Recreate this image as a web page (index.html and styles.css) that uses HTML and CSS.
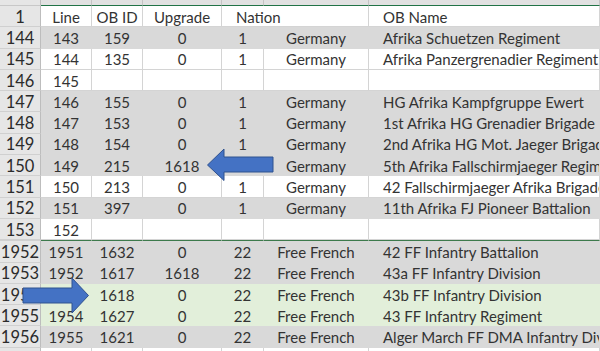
FILE: index.html
```html
<!DOCTYPE html>
<html>
<head>
<meta charset="utf-8">
<link rel="stylesheet" href="styles.css">
</head>
<body>
<div class="sheet">
  <div class="row colhdr">
    <div class="rh"></div><div class="ch"></div><div class="ch"></div><div class="ch"></div><div class="ch"></div><div class="ch"></div><div class="ch"></div>
  </div>
  <div class="row white">
    <div class="rh">1</div><div class="c">Line</div><div class="c">OB ID</div><div class="c">Upgrade</div><div class="c l span2">Nation</div><div class="c l">OB Name</div>
  </div>
  <div class="row gray">
    <div class="rh">144</div><div class="c">143</div><div class="c">159</div><div class="c">0</div><div class="c">1</div><div class="c">Germany</div><div class="c l">Afrika Schuetzen Regiment</div>
  </div>
  <div class="row white">
    <div class="rh">145</div><div class="c">144</div><div class="c">135</div><div class="c">0</div><div class="c">1</div><div class="c">Germany</div><div class="c l">Afrika Panzergrenadier Regiment</div>
  </div>
  <div class="row white">
    <div class="rh">146</div><div class="c">145</div><div class="c"></div><div class="c"></div><div class="c"></div><div class="c"></div><div class="c l"></div>
  </div>
  <div class="row gray">
    <div class="rh">147</div><div class="c">146</div><div class="c">155</div><div class="c">0</div><div class="c">1</div><div class="c">Germany</div><div class="c l">HG Afrika Kampfgruppe Ewert</div>
  </div>
  <div class="row gray">
    <div class="rh">148</div><div class="c">147</div><div class="c">153</div><div class="c">0</div><div class="c">1</div><div class="c">Germany</div><div class="c l">1st Afrika HG Grenadier Brigade</div>
  </div>
  <div class="row gray">
    <div class="rh">149</div><div class="c">148</div><div class="c">154</div><div class="c">0</div><div class="c">1</div><div class="c">Germany</div><div class="c l">2nd Afrika HG Mot. Jaeger Brigade</div>
  </div>
  <div class="row gray">
    <div class="rh">150</div><div class="c">149</div><div class="c">215</div><div class="c">1618</div><div class="c">1</div><div class="c">Germany</div><div class="c l">5th Afrika Fallschirmjaeger Regiment</div>
  </div>
  <div class="row white">
    <div class="rh">151</div><div class="c">150</div><div class="c">213</div><div class="c">0</div><div class="c">1</div><div class="c">Germany</div><div class="c l">42 Fallschirmjaeger Afrika Brigade</div>
  </div>
  <div class="row gray">
    <div class="rh">152</div><div class="c">151</div><div class="c">397</div><div class="c">0</div><div class="c">1</div><div class="c">Germany</div><div class="c l">11th Afrika FJ Pioneer Battalion</div>
  </div>
  <div class="row white">
    <div class="rh">153</div><div class="c">152</div><div class="c"></div><div class="c"></div><div class="c"></div><div class="c"></div><div class="c l"></div>
  </div>
  <div class="row gray split">
    <div class="rh">1952</div><div class="c">1951</div><div class="c">1632</div><div class="c">0</div><div class="c">22</div><div class="c">Free French</div><div class="c l">42 FF Infantry Battalion</div>
  </div>
  <div class="row gray">
    <div class="rh">1953</div><div class="c">1952</div><div class="c">1617</div><div class="c">1618</div><div class="c">22</div><div class="c">Free French</div><div class="c l">43a FF Infantry Division</div>
  </div>
  <div class="row green">
    <div class="rh">1954</div><div class="c">1953</div><div class="c">1618</div><div class="c">0</div><div class="c">22</div><div class="c">Free French</div><div class="c l">43b FF Infantry Division</div>
  </div>
  <div class="row green">
    <div class="rh">1955</div><div class="c">1954</div><div class="c">1627</div><div class="c">0</div><div class="c">22</div><div class="c">Free French</div><div class="c l">43 FF Infantry Regiment</div>
  </div>
  <div class="row gray">
    <div class="rh">1956</div><div class="c">1955</div><div class="c">1621</div><div class="c">0</div><div class="c">22</div><div class="c">Free French</div><div class="c l">Alger March FF DMA Infantry Division</div>
  </div>
  <div class="row white">
    <div class="rh">1957</div><div class="c"></div><div class="c"></div><div class="c"></div><div class="c"></div><div class="c"></div><div class="c l"></div>
  </div>

  <svg class="arrow" width="600" height="351" viewBox="0 0 600 351">
    <polygon points="207.5,165 224,149 224,157 273,157 273,172 224,172 224,180.5" />
  </svg>
  <svg class="arrow" width="600" height="351" viewBox="0 0 600 351">
    <polygon points="23,288 72,288 72,278 88.5,295.5 72,313 72,303 23,303" />
  </svg>
</div>
</body>
</html>
```
FILE: styles.css
```css
html, body {
  margin: 0;
  padding: 0;
  background: #ffffff;
}
body {
  width: 600px;
  height: 351px;
  overflow: hidden;
}
.sheet {
  position: relative;
  width: 600px;
  height: 351px;
  overflow: hidden;
  font-family: Lato, "Liberation Sans", sans-serif;
  font-size: 15px;
  color: #333333;
}
.row {
  display: grid;
  grid-template-columns: 41px 51px 51px 79px 42px 105px 1fr;
  height: 21.3px;
}
.row > div {
  box-sizing: border-box;
  display: flex;
  align-items: center;
  justify-content: center;
  white-space: nowrap;
  overflow: hidden;
  border-right: 1px solid #d4d4d4;
  border-bottom: 1px solid #d4d4d4;
  padding-top: 1px;
}
.row > .l {
  justify-content: flex-start;
  padding-left: 14px;
}
.row > .span2 {
  grid-column: span 2;
}
.row > .rh {
  background: #e6e6e6;
  border-right: 1px solid #bdbdbd;
  border-bottom: 1px solid #d0d0d0;
  font-size: 16.5px;
  color: #2b2b2b;
}
.colhdr {
  height: 6px;
}
.colhdr > .ch {
  background: #e1e1e1;
  border-right: 1px solid #c4c4c4;
  border-bottom: 1px solid #217346;
  padding: 0;
}
.colhdr > .rh {
  padding: 0;
  background: #e6e6e6;
  border-bottom: 1px solid #c8c8c8;
}
.white > div:not(.rh) {
  background: #ffffff;
}
.gray > div:not(.rh) {
  background: #d9d9d9;
  border-color: #d9d9d9;
}
.green > div:not(.rh) {
  background: #e2efda;
  border-color: #e2efda;
}
.split > div:not(.rh) {
  border-top: 1px solid #3d7a4c;
}
.split > .rh {
  border-top: 1px solid #d0d0d0;
}
.split {
  height: 22.3px;
}
.arrow {
  position: absolute;
  left: 0;
  top: 0;
  pointer-events: none;
}
.arrow polygon {
  fill: #4472c4;
  stroke: #2f528f;
  stroke-width: 1;
  stroke-linejoin: miter;
}
```
